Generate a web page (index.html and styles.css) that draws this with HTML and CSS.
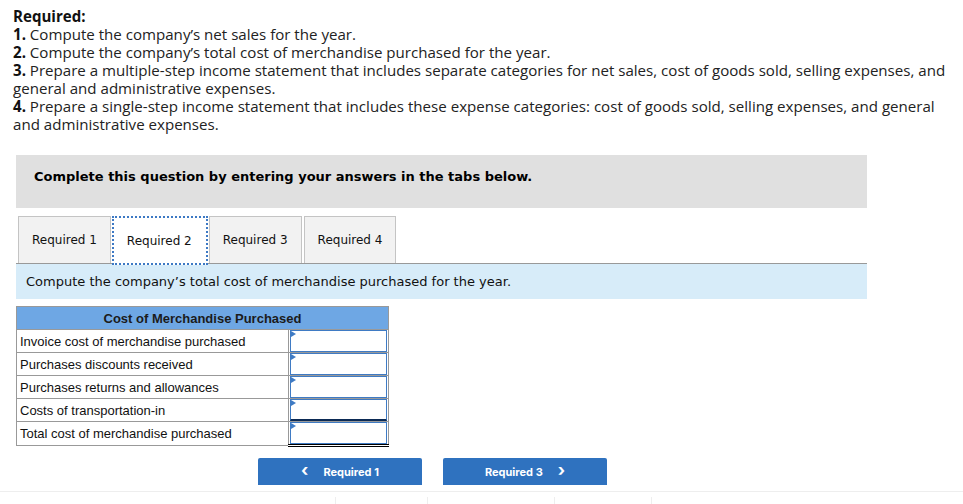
FILE: index.html
```html
<!DOCTYPE html>
<html>
<head>
<meta charset="utf-8">
<link rel="stylesheet" href="styles.css">
</head>
<body>
<div class="instructions">
  <div class="req-title">Required:</div>
  <div><b>1.</b> Compute the company’s net sales for the year.</div>
  <div><b>2.</b> Compute the company’s total cost of merchandise purchased for the year.</div>
  <div><b>3.</b> Prepare a multiple-step income statement that includes separate categories for net sales, cost of goods sold, selling expenses, and general and administrative expenses.</div>
  <div><b>4.</b> Prepare a single-step income statement that includes these expense categories: cost of goods sold, selling expenses, and general and administrative expenses.</div>
</div>

<div class="complete-box">Complete this question by entering your answers in the tabs below.</div>

<div class="tabs">
  <div class="tab">Required 1</div>
  <div class="tab active">Required 2</div>
  <div class="tab">Required 3</div>
  <div class="tab">Required 4</div>
</div>
<div class="prompt">Compute the company’s total cost of merchandise purchased for the year.</div>

<table class="cmp">
  <tr><th colspan="2">Cost of Merchandise Purchased</th></tr>
  <tr><td class="lbl">Invoice cost of merchandise purchased</td><td class="inp"><div class="box"></div></td></tr>
  <tr><td class="lbl">Purchases discounts received</td><td class="inp"><div class="box"></div></td></tr>
  <tr><td class="lbl">Purchases returns and allowances</td><td class="inp"><div class="box"></div></td></tr>
  <tr><td class="lbl">Costs of transportation-in</td><td class="inp"><div class="box sub"></div></td></tr>
  <tr><td class="lbl">Total cost of merchandise purchased</td><td class="inp total"><div class="box"></div></td></tr>
</table>

<div class="nav">
  <div class="btn"><span class="chev">&lsaquo;</span><span>Required 1</span></div>
  <div class="btn"><span>Required 3</span><span class="chev">&rsaquo;</span></div>
</div>

<div class="footer">
  <div class="fcell w1"></div>
  <div class="fcell w2"></div>
  <div class="fcell w3"></div>
  <div class="fcell w4"></div>
  <div class="fcell w5"></div>
</div>
</body>
</html>
```

FILE: styles.css
```css
html, body { margin: 0; padding: 0; background: #fff; }
body { width: 963px; height: 504px; overflow: hidden; }

.instructions {
  font-family: "Open Sans", "Lato", sans-serif;
  font-size: 15.1px;
  line-height: 18px;
  color: #222;
  padding: 7px 13px 0 13px;
  width: 935px;
}
.instructions b, .req-title { font-weight: 700; color: #111; }

.complete-box {
  margin: 22px 0 0 16px;
  width: 851px;
  height: 53px;
  box-sizing: border-box;
  background: #e0e0e0;
  font-family: "DejaVu Sans", Verdana, sans-serif;
  font-weight: bold;
  font-size: 13px;
  line-height: 16px;
  color: #000;
  padding: 14px 0 0 18px;
}

.tabs {
  display: flex;
  margin: 8px 0 0 18px;
  height: 47px;
  gap: 1px;
}
.tab {
  box-sizing: border-box;
  height: 47px;
  padding: 0 13px;
  background: #f2f2f2;
  border: 1px solid #c4c4c4;
  border-bottom: none;
  font-family: "DejaVu Sans", Verdana, sans-serif;
  font-size: 12px;
  color: #111;
  display: flex;
  align-items: center;
}
.tab.active {
  background: #fff;
  border: 2px dotted #3d79c4;
  padding: 0 14px 0 13px;
  height: 49px;
  margin-bottom: -2px;
  position: relative;
  z-index: 2;
}
.tab:nth-child(4) { margin-left: 1px; }

.prompt {
  margin-left: 16px;
  width: 851px;
  height: 36px;
  box-sizing: border-box;
  border-top: 1px solid #999;
  background: #d7ecf9;
  font-family: "DejaVu Sans", Verdana, sans-serif;
  font-size: 13px;
  color: #111;
  display: flex;
  align-items: center;
  padding-left: 10px;
}

.cmp {
  margin: 7px 0 0 16px;
  border-collapse: collapse;
  font-family: "Liberation Sans", Arial, sans-serif;
  font-size: 13px;
  color: #111;
}
.cmp th {
  background: #6ea7e4;
  border: 1px solid #999;
  height: 22px;
  padding: 0;
  font-weight: bold;
  font-size: 13px;
  text-align: center;
  color: #1b1b1b;
}
.cmp td { border: 1px solid #999; padding: 0; height: 22px; }
.cmp td.lbl { width: 268px; padding-left: 3px; }
.cmp td.inp { width: 99px; }
.box {
  position: relative;
  height: 20px;
  margin: 0 1px;
  border: 1px solid #3f7bc4;
  background: #fff;
}
.box::before {
  content: "";
  position: absolute;
  left: 0; top: 0;
  border-top: 3px solid transparent;
  border-bottom: 3px solid transparent;
  border-left: 5px solid #3f7bc4;
}
.box.sub { border-bottom: 2px solid #0b2a55; height: 19px; }
.cmp td.total { border-bottom: 3px double #000; }

.nav {
  display: flex;
  gap: 21px;
  margin: 11px 0 0 258px;
}
.btn {
  width: 164px;
  height: 27px;
  background: #2f72bf;
  border-radius: 2px 2px 0 0;
  color: #fff;
  font-family: "Inter", "Liberation Sans", sans-serif;
  font-weight: 700;
  font-size: 11px;
  display: flex;
  align-items: center;
  justify-content: center;
  gap: 15px;
}
.chev { font-size: 17px; font-weight: 700; line-height: 1; margin-top: -2px; }

.footer {
  margin-top: 6px;
  border-top: 1px solid #eee;
  display: flex;
  height: 16px;
}
.fcell { height: 10px; margin-top: 5px; border-right: 1px solid #eee; }
.w1 { width: 335px; }
.w2 { width: 91px; }
.w3 { width: 126px; }
.w4 { width: 96px; }
.w5 { width: 100px; border-right: none; }
```
